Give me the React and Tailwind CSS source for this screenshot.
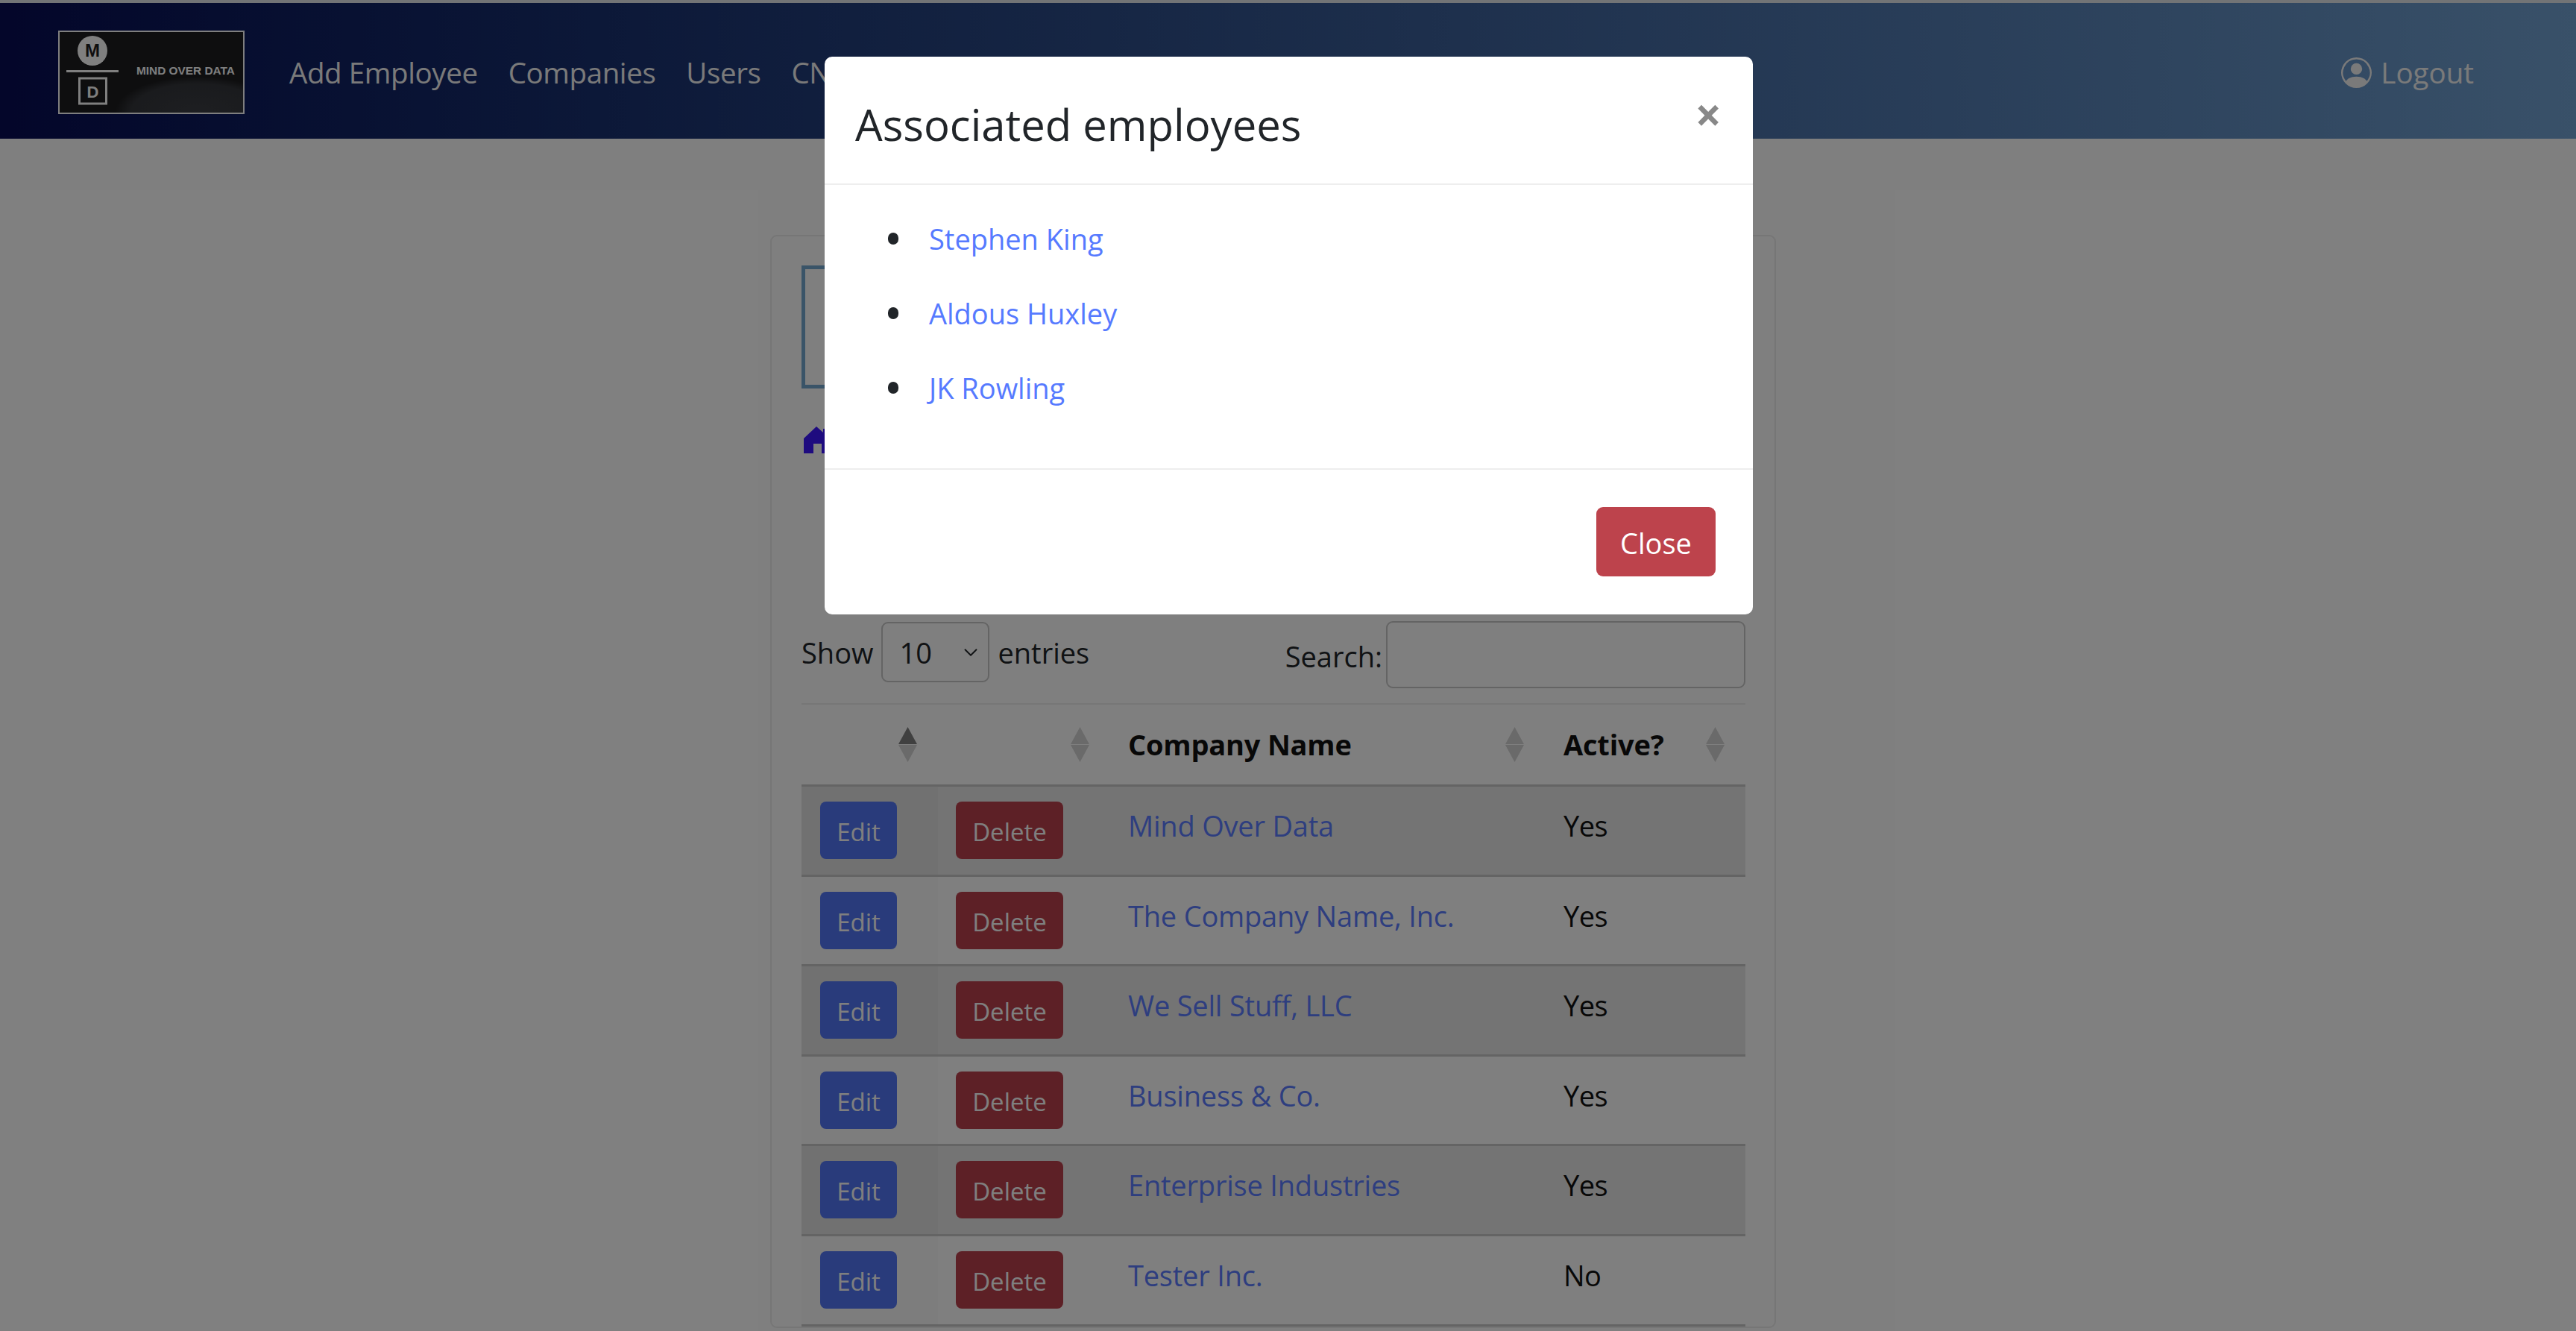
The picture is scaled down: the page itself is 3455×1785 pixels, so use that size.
import React from "react";
import { ChevronDown } from "lucide-react";

function Logo() {
  return (
    <svg viewBox="0 0 246 108" className="w-[250px] h-[112px] shrink-0 border-2 border-white box-border" preserveAspectRatio="none">
      <defs>
        <radialGradient id="glow" cx="0.75" cy="1" r="0.45">
          <stop offset="0" stopColor="#3c3e44" />
          <stop offset="0.8" stopColor="#34363b" />
          <stop offset="1" stopColor="#1c1c1e" />
        </radialGradient>
      </defs>
      <rect width="246" height="108" fill="#1c1c1e" />
      <rect width="246" height="108" fill="url(#glow)" />
      <circle cx="44" cy="25" r="20" fill="#fff" />
      <text x="44" y="33" textAnchor="middle" fontSize="24" fontWeight="800" fill="#1c1c1e" fontFamily="Liberation Sans, sans-serif">M</text>
      <rect x="9" y="51" width="70" height="3" fill="#fff" />
      <rect x="26.5" y="62" width="36" height="34" fill="none" stroke="#fff" strokeWidth="3" />
      <text x="44.5" y="88" textAnchor="middle" fontSize="22" fontWeight="800" fill="#fff" fontFamily="Liberation Sans, sans-serif">D</text>
      <text x="103" y="57" fontSize="15.4" fontWeight="700" fill="#fff" fontFamily="Liberation Sans, sans-serif">MIND OVER DATA</text>
    </svg>
  );
}

function Sort({ active }) {
  return (
    <svg viewBox="0 0 25 47" className="w-[25px] h-[47px]">
      <polygon points="12.5,0 25,23 0,23" fill={active ? "#808080" : "#d4d4d4"} />
      <polygon points="0,24 25,24 12.5,47" fill="#d4d4d4" />
    </svg>
  );
}

function PersonCircle() {
  return (
    <svg viewBox="0 0 16 16" fill="currentColor" className="h-[41px] w-[41px]">
      <path d="M11 6a3 3 0 1 1-6 0 3 3 0 0 1 6 0z" />
      <path fillRule="evenodd" d="M0 8a8 8 0 1 1 16 0A8 8 0 0 1 0 8zm8-7a7 7 0 0 0-5.468 11.37C3.242 11.226 4.805 10 8 10s4.757 1.225 5.468 2.37A7 7 0 0 0 8 1z" />
    </svg>
  );
}

function House() {
  return (
    <svg viewBox="0 0 42 36" fill="currentColor" className="h-[36px] w-[42px]">
      <path d="M0 16 L17 0 L26 8 L26 3 L34 3 L34 16 L36 36 L24 36 L24 23 L13 23 L13 36 L0 36 Z" />
    </svg>
  );
}

const rows = [
  ["Mind Over Data", "Yes"],
  ["The Company Name, Inc.", "Yes"],
  ["We Sell Stuff, LLC", "Yes"],
  ["Business & Co.", "Yes"],
  ["Enterprise Industries", "Yes"],
  ["Tester Inc.", "No"],
];

const people = ["Stephen King", "Aldous Huxley", "JK Rowling"];

export default function App() {
  return (
    <div className="relative h-[1785px] w-[3455px] overflow-hidden bg-white text-[#212529] font-['Open_Sans',sans-serif] text-[38px] leading-[53px]">
      <header className="flex h-[186px] items-center border-t-4 border-[#e4e8ec] bg-gradient-to-r from-[#080c54] to-[#72a2d2] pl-[78px] pr-[137px] pt-[4px] text-[#f4f4f4]">
        <Logo />
        <nav className="ml-[60px] flex gap-[41px] text-[38.5px] tracking-[-0.4px]">
          <a>Add Employee</a>
          <a>Companies</a>
          <a>Users</a>
          <a>CNAME</a>
        </nav>
        <a className="ml-auto flex items-center gap-[12px] text-[38.5px]">
          <PersonCircle />
          Logout
        </a>
      </header>

      <main className="ml-[1033px] mt-[129px] w-[1349px] rounded-[9px] border-2 border-[#ececec] pl-[40px] pr-[39px] pt-[39px]">
        <div className="h-[165px] w-[1100px] border-[5px] border-[#74a8d0]" />
        <div className="mt-[50px] flex h-[38px] items-center pl-[3px] text-[#3c16ff]">
          <House />
        </div>

        <div className="mt-[224px] flex items-start">
          <div className="flex items-center gap-[11px] pt-[1px]">
            <span className="pt-[2px]">Show</span>
            <div className="flex h-[81px] w-[145px] items-center justify-between rounded-[9px] border-2 border-[#c8c8c8] pl-[22px] pr-[8px]">
              <span className="pt-[2px]">10</span>
              <ChevronDown className="h-[30px] w-[30px]" strokeWidth={1.5} />
            </div>
            <span className="pt-[2px]">entries</span>
          </div>
          <div className="ml-auto flex items-center gap-[5px]">
            <label className="pt-[4px]">Search:</label>
            <input className="h-[90px] w-[482px] rounded-[9px] border-2 border-[#c8c8c8] bg-white" />
          </div>
        </div>

        <div className="mt-[20px] border-t-2 border-[#eeeeee]">
          <div className="grid h-[110px] grid-cols-[183px_230px_584px_1fr] items-center border-b-[3px] border-[#c8c8c8] font-bold tracking-[-0.2px] text-[#111]">
            <div className="flex justify-end pr-[28px]"><Sort active /></div>
            <div className="flex justify-end pr-[27px]"><Sort /></div>
            <div className="flex items-center justify-between pl-[25px] pr-[28px]">
              <span>Company Name</span>
              <Sort />
            </div>
            <div className="flex items-center justify-between pl-[25px] pr-[28px]">
              <span>Active?</span>
              <Sort />
            </div>
          </div>
          {rows.map(([name, active], i) => (
            <div
              key={name}
              className={`grid h-[120.6px] grid-cols-[183px_230px_584px_1fr] border-b-[3px] border-[#c8c8c8] ${i % 2 === 0 ? "bg-[#e9e9e9]" : "bg-white"}`}
            >
              <div className={`pl-[25px] pt-[20px] ${i % 2 === 0 ? "bg-[#e2e2e2]" : "bg-[#fafafa]"}`}>
                <button className="flex h-[77px] w-[103px] items-center justify-center rounded-[8px] bg-[#5276f6] pt-[4px] text-[33px] text-white">Edit</button>
              </div>
              <div className="pl-[24px] pt-[20px]">
                <button className="flex h-[77px] w-[144px] items-center justify-center rounded-[8px] bg-[#bb414c] pt-[4px] text-[33px] text-white">Delete</button>
              </div>
              <div className="pl-[25px] pt-[26px] tracking-[-0.2px] text-[#5c7dff]">{name}</div>
              <div className="pl-[25px] pt-[26px] tracking-[-0.6px] text-[#111]">{active}</div>
            </div>
          ))}
        </div>
      </main>

      <div className="absolute inset-0 bg-black/50" />

      <div className="absolute left-[1106px] top-[76px] flex h-[748px] w-[1245px] flex-col rounded-[10px] bg-white">
        <div className="flex h-[172px] items-start justify-between border-b-2 border-[#eeeeee] pl-[41px] pr-[42px]">
          <h5 className="pt-[58px] text-[58px] font-medium leading-[66px]">Associated employees</h5>
          <span className="pt-[46px] text-[62px] font-bold leading-[62px] text-[#888888]">×</span>
        </div>
        <ul className="h-[380px] pl-[85px] pt-[22px] leading-[100px]">
          {people.map((p) => (
            <li key={p} className="flex items-center">
              <span className="mr-[41px] h-[16px] w-[14px] rounded-full bg-[#212529]" />
              <a className="text-[#567aff]">{p}</a>
            </li>
          ))}
        </ul>
        <div className="flex flex-1 items-start justify-end border-t-2 border-[#eeeeee] pr-[50px] pt-[50px]">
          <button className="h-[93px] w-[160px] rounded-[9px] bg-[#bd434c] pt-[3px] text-white">Close</button>
        </div>
      </div>
    </div>
  );
}
